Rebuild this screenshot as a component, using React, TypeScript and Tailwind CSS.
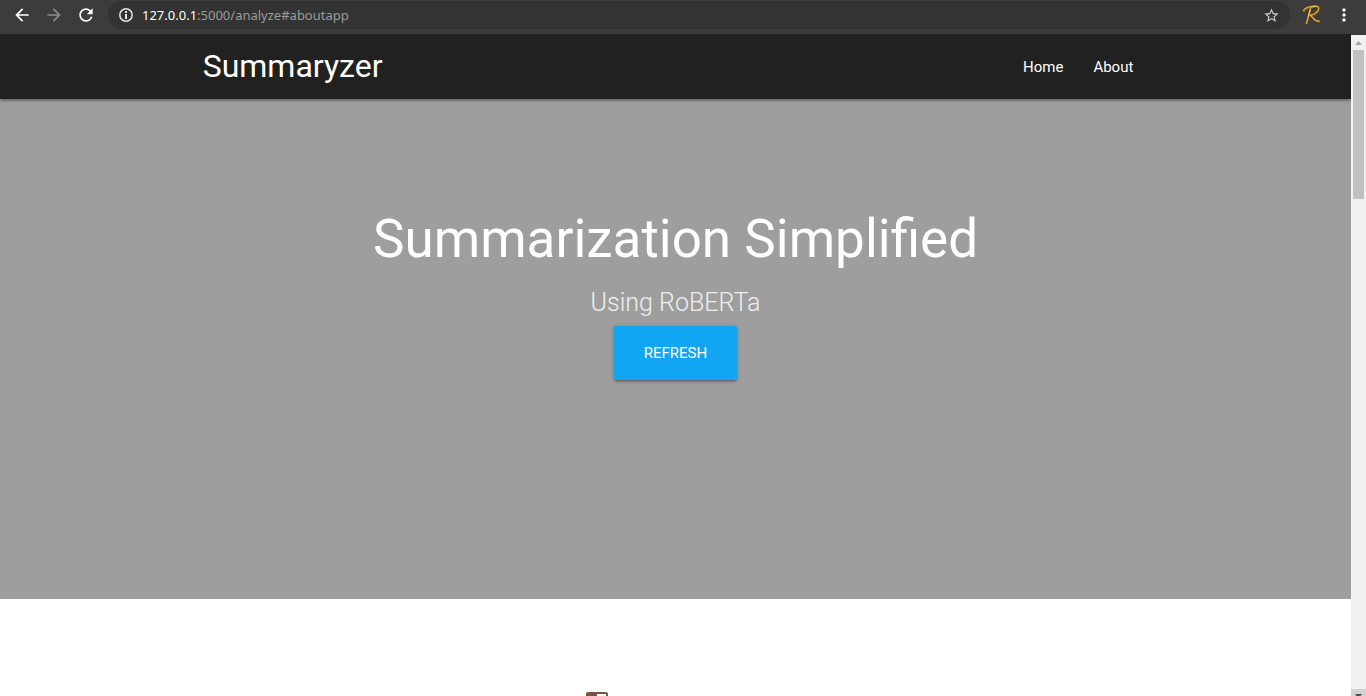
import React from "react";
import {
  MdArrowBack,
  MdArrowForward,
  MdChromeReaderMode,
  MdMoreVert,
  MdRefresh,
  MdStarBorder,
} from "react-icons/md";

function InfoIcon() {
  return (
    <svg viewBox="0 0 16 16" className="size-4 shrink-0" fill="none" aria-hidden="true">
      <circle cx="8" cy="8" r="6.200" stroke="#e4e4e4" strokeWidth="1.500" />
      <path d="M7 4H9V6H7ZM7 7H9V12H7Z" fill="#e4e4e4" />
    </svg>
  );
}

function ProfileLogo() {
  return (
    <svg viewBox="0 0 20 22" className="h-[22px] w-5" fill="none" strokeLinecap="round" strokeLinejoin="round" aria-hidden="true">
      <path d="M2 7.500C3 4 9 2.300 14 2.400C19 2.600 17.500 8 12 10.500L8.500 11.500C11 13 12.500 18.500 17.500 17.500" stroke="#8a5c14" strokeWidth="2" />
      <path d="M8.500 4C7.500 9 6 14 4.500 19.500" stroke="#d99a20" strokeWidth="1.700" />
      <path d="M1.500 6.500C2.500 4 8 2 14 2C18.500 2.300 17 7.500 12 10L8.300 11.200C11 12.500 12 18 17.500 17" stroke="#e9b23a" strokeWidth="1.100" />
      <path d="M9.500 3.200L14 2.200M8 6.500L6.500 12" stroke="#ffe08a" strokeWidth="0.700" />
    </svg>
  );
}

function BrowserBar() {
  return (
    <header className="flex h-[34px] shrink-0 items-start bg-[#3c3c3c] text-white">
      <div className="flex h-[30px] items-center gap-3 pl-3 pr-3">
        <button type="button" aria-label="Back"><MdArrowBack size={20} /></button>
        <button type="button" aria-label="Forward" className="text-[#8c8c8c]"><MdArrowForward size={20} /></button>
        <button type="button" aria-label="Reload"><MdRefresh size={20} /></button>
      </div>
      <div className="mt-px flex h-7 grow items-center rounded-full bg-[#333333] px-2.5">
        <InfoIcon />
        <a href="#aboutapp" className="ml-2 grow font-['Noto_Sans',sans-serif] text-[13px] leading-5 text-[#9c9c9c]">
          <span className="text-white">127.0.0.1</span>:5000/analyze#aboutapp
        </a>
        <button type="button" aria-label="Bookmark" className="text-[#cccccc]"><MdStarBorder size={17} /></button>
      </div>
      <div className="flex h-[30px] items-center gap-3 pl-3 pr-3">
        <button type="button" aria-label="Profile"><ProfileLogo /></button>
        <button type="button" aria-label="Menu"><MdMoreVert size={20} /></button>
      </div>
    </header>
  );
}

function Scrollbar() {
  return (
    <div className="flex w-[15px] shrink-0 flex-col bg-[#f1f1f1]" aria-hidden="true">
      <div className="h-px bg-[#3c3c3c]" />
      <div className="flex h-[15px] items-center justify-center">
        <svg viewBox="0 0 7 4" className="h-1 w-[7px]"><path d="M3.500 0L7 4H0Z" fill="#a3a3a3" /></svg>
      </div>
      <div className="mx-0.5 h-[149px] bg-[#c1c1c1]" />
      <div className="grow" />
      <div className="flex h-[7px] items-end justify-center bg-[#d2d2d2]">
        <svg viewBox="0 0 7 2" className="h-0.5 w-[7px]"><path d="M0 0H7L5.500 2H1.500Z" fill="#505050" /></svg>
      </div>
    </div>
  );
}

export default function App() {
  return (
    <div className="flex h-screen flex-col overflow-hidden bg-white font-[Roboto,sans-serif]">
      <BrowserBar />
      <div className="flex min-h-0 grow">
        <main className="min-w-0 grow overflow-hidden">
          <nav className="relative h-[65px] bg-[#212121] text-white shadow-[0_2px_2px_0_rgba(0,0,0,0.14),0_3px_1px_-2px_rgba(0,0,0,0.12),0_1px_5px_0_rgba(0,0,0,0.2)]">
            <div className="mx-auto flex w-[70%] items-start justify-between">
              <a href="#top" className="text-[32px] leading-16">Summaryzer</a>
              <ul className="flex text-[15px] leading-[66px]">
                <li><a href="#home" className="block px-[15px]">Home</a></li>
                <li><a href="#about" className="block px-[15px]">About</a></li>
              </ul>
            </div>
          </nav>
          <section className="flex h-[500px] flex-col items-center bg-[#9e9e9e] pt-[110px] text-white">
            <h1 className="text-[53px] leading-[60px]">Summarization Simplified</h1>
            <p className="mt-4 text-[25px] font-light leading-9 text-[#eeeeee]">Using RoBERTa</p>
            <button type="button" className="mt-[5px] h-[54px] rounded-[2px] bg-[#12a5f4] px-[30px] text-[15px] uppercase shadow-[0_2px_2px_0_rgba(0,0,0,0.14),0_3px_1px_-2px_rgba(0,0,0,0.12),0_1px_5px_0_rgba(0,0,0,0.2)]">
              Refresh
            </button>
          </section>
          <section className="mx-auto flex w-[70%] pt-[89px]">
            <div className="flex grow justify-center">
              <MdChromeReaderMode size={24} className="mr-[158px] text-[#795548]" />
            </div>
          </section>
        </main>
        <Scrollbar />
      </div>
    </div>
  );
}
